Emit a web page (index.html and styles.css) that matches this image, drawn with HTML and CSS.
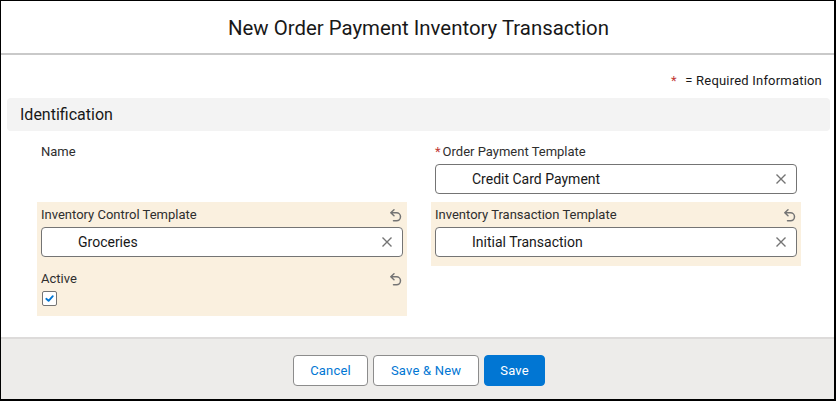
FILE: index.html
```html
<!DOCTYPE html>
<html lang="en">
<head>
    <meta charset="UTF-8">
    <meta name="viewport" content="width=device-width, initial-scale=1.0">
    <title>New Order Payment Inventory Transaction</title>
    <link rel="stylesheet" href="styles.css">
</head>
<body>
    <div class="modal">
        <div class="modal-header">
            <h2>New Order Payment Inventory Transaction</h2>
        </div>

        <div class="modal-body">
            <div class="required-info"><span class="req">*</span> = Required Information</div>

            <div class="section-title">Identification</div>

            <div class="form-grid">
                <div class="field name-field">
                    <div class="label-row"><span>Name</span></div>
                </div>

                <div class="field payment-field">
                    <div class="label-row"><span><span class="req-small">*</span>Order Payment Template</span></div>
                    <div class="lookup">
                        <span>Credit Card Payment</span>
                        <svg class="clear" viewBox="0 0 12 12"><path d="M1.5 1.5 L10.5 10.5 M10.5 1.5 L1.5 10.5"/></svg>
                    </div>
                </div>

                <div class="edited left-edited">
                    <div class="field">
                        <div class="label-row">
                            <span>Inventory Control Template</span>
                            <svg class="undo" viewBox="0 0 14 14"><path d="M6 1.8 L2.8 4.8 L6 7.8 M3 4.8 H8.5 A4 4 0 0 1 8.5 12.8 H5.5"/></svg>
                        </div>
                        <div class="lookup">
                            <span>Groceries</span>
                            <svg class="clear" viewBox="0 0 12 12"><path d="M1.5 1.5 L10.5 10.5 M10.5 1.5 L1.5 10.5"/></svg>
                        </div>
                    </div>
                    <div class="field">
                        <div class="label-row">
                            <span>Active</span>
                            <svg class="undo" viewBox="0 0 14 14"><path d="M6 1.8 L2.8 4.8 L6 7.8 M3 4.8 H8.5 A4 4 0 0 1 8.5 12.8 H5.5"/></svg>
                        </div>
                        <div class="checkbox">
                            <svg viewBox="0 0 12 12"><path d="M2.5 6.3 L5 8.6 L9.6 3.4"/></svg>
                        </div>
                    </div>
                </div>

                <div class="edited right-edited">
                    <div class="field">
                        <div class="label-row">
                            <span>Inventory Transaction Template</span>
                            <svg class="undo" viewBox="0 0 14 14"><path d="M6 1.8 L2.8 4.8 L6 7.8 M3 4.8 H8.5 A4 4 0 0 1 8.5 12.8 H5.5"/></svg>
                        </div>
                        <div class="lookup">
                            <span>Initial Transaction</span>
                            <svg class="clear" viewBox="0 0 12 12"><path d="M1.5 1.5 L10.5 10.5 M10.5 1.5 L1.5 10.5"/></svg>
                        </div>
                    </div>
                </div>
            </div>
        </div>

        <div class="modal-footer">
            <button class="btn btn-cancel">Cancel</button>
            <button class="btn">Save &amp; New</button>
            <button class="btn btn-brand">Save</button>
        </div>
    </div>
</body>
</html>
```

FILE: styles.css
```css
* {
    margin: 0;
    padding: 0;
    box-sizing: border-box;
}
body {
    font-family: "Roboto", "Liberation Sans", sans-serif;
    color: #181818;
    background: #fff;
}
.modal {
    width: 836px;
    height: 401px;
    border: 1px solid #000;
    border-width: 1px 2px 2px 1px;
    display: flex;
    flex-direction: column;
    background: #fff;
}
.modal-header {
    height: 54px;
    border-bottom: 2px solid #c9c9c9;
    display: flex;
    align-items: center;
    justify-content: center;
}
.modal-header h2 {
    font-size: 20.4px;
    font-weight: 400;
    padding: 1px 0 0 2px;
}
.modal-body {
    flex: 1;
    padding: 16px 4px 0 6px;
}
.required-info {
    text-align: right;
    font-size: 13px;
    line-height: 20px;
    padding-right: 8px;
    letter-spacing: 0.2px;
}
.req {
    color: #c23934;
    margin-right: 5px;
}
.section-title {
    margin-top: 7px;
    height: 33px;
    background: #f3f3f3;
    border-radius: 4px;
    font-size: 16px;
    line-height: 33px;
    padding-left: 13px;
}
.form-grid {
    display: grid;
    grid-template-columns: 370px 370px;
    grid-template-rows: 63px 64px auto;
    column-gap: 24px;
    padding-left: 30px;
    margin-top: 8px;
}
.name-field {
    grid-column: 1;
    grid-row: 1;
}
.payment-field {
    grid-column: 2;
    grid-row: 1;
}
.left-edited {
    grid-column: 1;
    grid-row: 2 / 4;
}
.right-edited {
    grid-column: 2;
    grid-row: 2;
}
.edited {
    background: #faf0df;
}
.left-edited .field {
    height: 64px;
}
.left-edited .field + .field {
    height: 50px;
}
.field {
    padding: 3px 4px 9px;
}
.label-row {
    display: flex;
    justify-content: space-between;
    align-items: center;
    font-size: 13px;
    line-height: 20px;
    color: #2e2e2e;
    margin-bottom: 2px;
}
.req-small {
    color: #c23934;
    margin-right: 2px;
}
.undo {
    width: 14px;
    height: 14px;
    margin-right: 1px;
    fill: none;
    stroke: #747474;
    stroke-width: 1.5;
    stroke-linecap: round;
    stroke-linejoin: round;
}
.lookup {
    height: 30px;
    border: 1px solid #747474;
    border-radius: 4px;
    background: #fff;
    display: flex;
    align-items: center;
    justify-content: space-between;
    padding: 0 9px 0 36px;
    font-size: 14px;
    color: #181818;
}
.clear {
    width: 12px;
    height: 12px;
    fill: none;
    stroke: #747474;
    stroke-width: 1.4;
}
.checkbox {
    width: 15px;
    height: 15px;
    margin: 0 0 0 1px;
    border: 1px solid #747474;
    border-radius: 2px;
    background: #fff;
    display: flex;
    align-items: center;
    justify-content: center;
}
.checkbox svg {
    width: 11px;
    height: 11px;
    fill: none;
    stroke: #0176d3;
    stroke-width: 2;
    stroke-linecap: round;
    stroke-linejoin: round;
}
.modal-footer {
    height: 62px;
    border-top: 2px solid #dddbda;
    background: #edecea;
    display: flex;
    justify-content: center;
    align-items: flex-start;
    gap: 5px;
    padding: 16px 0 0 3px;
}
.btn {
    height: 31px;
    border: 1px solid #8c8c8c;
    border-radius: 4px;
    background: #fff;
    color: #0176d3;
    font-family: "Roboto", "Liberation Sans", sans-serif;
    font-size: 13px;
    letter-spacing: 0.2px;
    padding: 0 17px;
}
.btn-cancel {
    padding: 0 16px;
}
.btn-brand {
    background: #0176d3;
    border-color: #0176d3;
    color: #fff;
    padding: 0 15px;
}
```
